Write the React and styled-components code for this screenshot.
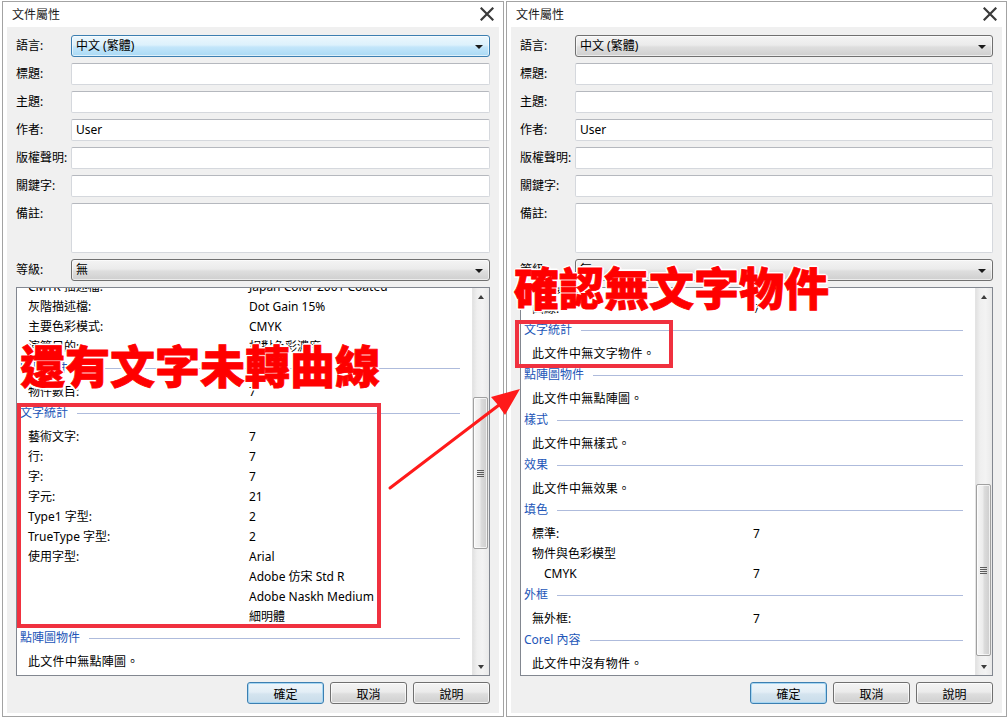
import styled, { createGlobalStyle } from 'styled-components'

const GlobalStyle = createGlobalStyle`
  html, body {
    margin: 0;
    padding: 0;
    background: #ffffff;
  }
  body {
    width: 1008px;
    height: 718px;
    overflow: hidden;
    font-family: "Noto Sans", "Noto Sans CJK TC", sans-serif;
    font-size: 12px;
    color: #000;
  }
  * { box-sizing: border-box; }
`

const leftRows = [
  { t: 'item', label: 'CMYK 描述檔:', value: 'Japan Color 2001 Coated' },
  { t: 'item', label: '灰階描述檔:', value: 'Dot Gain 15%' },
  { t: 'item', label: '主要色彩模式:', value: 'CMYK' },
  { t: 'item', label: '演算目的:', value: '相對色彩濃度' },
  { t: 'head', label: '圖形物件' },
  { t: 'item', label: '物件數目:', value: '7' },
  { t: 'head', label: '文字統計' },
  { t: 'item', label: '藝術文字:', value: '7' },
  { t: 'item', label: '行:', value: '7' },
  { t: 'item', label: '字:', value: '7' },
  { t: 'item', label: '字元:', value: '21' },
  { t: 'item', label: 'Type1 字型:', value: '2' },
  { t: 'item', label: 'TrueType 字型:', value: '2' },
  { t: 'item', label: '使用字型:', value: 'Arial' },
  { t: 'item', label: '', value: 'Adobe 仿宋 Std R' },
  { t: 'item', label: '', value: 'Adobe Naskh Medium' },
  { t: 'item', label: '', value: '細明體' },
  { t: 'head', label: '點陣圖物件' },
  { t: 'msg', label: '此文件中無點陣圖。' },
]

const rightRows = [
  { t: 'item', label: '物件數目:', value: '7' },
  { t: 'item', label: '曲線:', value: '7' },
  { t: 'head', label: '文字統計' },
  { t: 'msg', label: '此文件中無文字物件。' },
  { t: 'head', label: '點陣圖物件' },
  { t: 'msg', label: '此文件中無點陣圖。' },
  { t: 'head', label: '樣式' },
  { t: 'msg', label: '此文件中無樣式。' },
  { t: 'head', label: '效果' },
  { t: 'msg', label: '此文件中無效果。' },
  { t: 'head', label: '填色' },
  { t: 'item', label: '標準:', value: '7' },
  { t: 'item', label: '物件與色彩模型', value: '' },
  { t: 'item', label: 'CMYK', value: '7', indent: true },
  { t: 'head', label: '外框' },
  { t: 'item', label: '無外框:', value: '7' },
  { t: 'head', label: 'Corel 內容' },
  { t: 'msg', label: '此文件中沒有物件。' },
]

const CloseIcon = () => (
  <svg width="14" height="14" viewBox="0 0 14 14">
    <path d="M1.5 1.5 L12.5 12.5 M12.5 1.5 L1.5 12.5" stroke="#3a3a3a" strokeWidth="2.2" strokeLinecap="square" />
  </svg>
)

const DocDialog = ({ width, hover, rows, offset, thumbTop, thumbHeight }) => (
  <Dialog $width={width}>
    <TitleBar>
      <Title>文件屬性</Title>
      <Close>
        <CloseIcon />
      </Close>
    </TitleBar>
    <Client>
      <Label>語言:</Label>
      <Combo $hover={hover}>中文 (繁體)</Combo>
      <Label>標題:</Label>
      <TextBox />
      <Label>主題:</Label>
      <TextBox />
      <Label>作者:</Label>
      <TextBox>User</TextBox>
      <Label>版權聲明:</Label>
      <TextBox />
      <Label>關鍵字:</Label>
      <TextBox />
      <Label>備註:</Label>
      <TextBox />
      <Label>等級:</Label>
      <Combo>無</Combo>
      <ListBox>
        <Viewport>
          <ListContent style={{ marginTop: offset }}>
            {rows.map((r, i) => {
              if (r.t === 'head') return <SectionHead key={i}>{r.label}</SectionHead>
              if (r.t === 'msg') return <Message key={i}>{r.label}</Message>
              return (
                <ItemRow key={i}>
                  <ItemLabel $indent={r.indent}>{r.label}</ItemLabel>
                  <span>{r.value}</span>
                </ItemRow>
              )
            })}
          </ListContent>
        </Viewport>
        <ScrollBar>
          <ScrollButton>
            <ArrowUp />
          </ScrollButton>
          <Track>
            <Thumb style={{ marginTop: thumbTop, height: thumbHeight }}>
              <Grip />
            </Thumb>
          </Track>
          <ScrollButton>
            <ArrowDown />
          </ScrollButton>
        </ScrollBar>
      </ListBox>
      <ButtonRow>
        <Button $default>確定</Button>
        <Button>取消</Button>
        <Button>說明</Button>
      </ButtonRow>
    </Client>
  </Dialog>
)

export default function App() {
  return (
    <>
      <GlobalStyle />
      <Page>
        <DocDialog width={502} hover rows={leftRows} offset={-11} thumbTop={92} thumbHeight={152} />
        <DocDialog width={501} rows={rightRows} offset={-9} thumbTop={179} thumbHeight={172} />

        <Callout $x={20} $y={342}>還有文字未轉曲線</Callout>
        <Callout $x={514} $y={264}>確認無文字物件</Callout>
        <RedBox $x={17} $y={403} $w={364} $h={225} />
        <RedBox $x={515} $y={320} $w={158} $h={48} />
        <Overlay width="1008" height="718" viewBox="0 0 1008 718">
          <line x1="390" y1="488" x2="503" y2="402" stroke="#ff1a1a" strokeWidth="3" strokeLinecap="round" />
          <polygon points="520,389 505,415 498,405 491,397" fill="#ff1a1a" />
        </Overlay>
      </Page>
    </>
  )
}

const Page = styled.div`
  position: relative;
  display: flex;
  gap: 2px;
  width: 1008px;
  height: 718px;
  padding: 1px 0 0 2px;
`

const Dialog = styled.div`
  width: ${(p) => p.$width}px;
  height: 716px;
  border: 1px solid #a3a3a3;
  background: #ffffff;
  padding: 0 4px 3px 4px;
  display: flex;
  flex-direction: column;
`

const TitleBar = styled.div`
  height: 25px;
  display: flex;
  align-items: center;
  justify-content: space-between;
  padding: 1px 5px 0 5px;
`

const Title = styled.span`
  font-size: 12px;
  color: #1a1a1a;
  line-height: 16px;
`

const Close = styled.span`
  display: flex;
  align-items: center;
  margin-top: -2px;
`

const Client = styled.div`
  flex: 1;
  background: #f0f0f0;
  padding: 8px 9px 9px 9px;
  display: grid;
  grid-template-columns: 55px 1fr;
  grid-template-rows: repeat(6, 22px) 50px 22px 1fr 22px;
  row-gap: 6px;
  min-height: 0;
`

const Label = styled.div`
  line-height: 22px;
  font-size: 12px;
  white-space: nowrap;
`

const TextBox = styled.div`
  background: #ffffff;
  border: 1px solid #d5d8dd;
  border-top-color: #b5b8be;
  border-radius: 2px;
  padding: 0 4px;
  line-height: 20px;
  font-size: 12px;
`

const Combo = styled.div`
  position: relative;
  border: 1px solid ${(p) => (p.$hover ? '#3c7fb1' : '#707070')};
  border-radius: 3px;
  padding: 0 4px;
  line-height: 20px;
  font-size: 12px;
  background: ${(p) =>
    p.$hover
      ? 'linear-gradient(#ecf7fd 0%, #dcf1fc 45%, #c3e6fa 55%, #a9d9f5 100%)'
      : 'linear-gradient(#f4f4f4 0%, #ebebeb 45%, #dedede 55%, #cfcfcf 100%)'};
  box-shadow: inset 0 0 0 1px rgba(255, 255, 255, 0.6);

  &::after {
    content: '';
    position: absolute;
    right: 6px;
    top: 9px;
    border-left: 4px solid transparent;
    border-right: 4px solid transparent;
    border-top: 4px solid #1a1a1a;
  }
`

const ListBox = styled.div`
  grid-column: 1 / -1;
  border: 1px solid #828790;
  background: #ffffff;
  display: flex;
  overflow: hidden;
  min-height: 0;
`

const Viewport = styled.div`
  flex: 1;
  overflow: hidden;
`

const ListContent = styled.div`
  display: flex;
  flex-direction: column;
`

const SectionHead = styled.div`
  height: 25px;
  padding: 0 12px 3px 3px;
  display: flex;
  align-items: center;
  gap: 9px;
  color: #2356b8;
  font-size: 12px;
  line-height: 22px;
  white-space: nowrap;

  &::after {
    content: '';
    flex: 1;
    height: 1px;
    background: #aebbdc;
  }
`

const ItemRow = styled.div`
  height: 20px;
  display: grid;
  grid-template-columns: 232px 1fr;
  line-height: 20px;
  font-size: 12px;
  white-space: nowrap;
`

const ItemLabel = styled.span`
  padding-left: ${(p) => (p.$indent ? 23 : 11)}px;
`

const Message = styled.div`
  height: 20px;
  line-height: 20px;
  padding-left: 11px;
  font-size: 12px;
  letter-spacing: 0.3px;
`

const ScrollBar = styled.div`
  width: 17px;
  display: flex;
  flex-direction: column;
  background: linear-gradient(to right, #e2e2e2 0%, #efefef 25%, #f3f3f3 60%, #e9e9e9 100%);
  border-left: 1px solid #e4e4e4;
`

const ScrollButton = styled.div`
  height: 17px;
  display: flex;
  align-items: center;
  justify-content: center;
`

const ArrowUp = styled.span`
  border-left: 3.5px solid transparent;
  border-right: 3.5px solid transparent;
  border-bottom: 4px solid #3d3d3d;
`

const ArrowDown = styled.span`
  border-left: 3.5px solid transparent;
  border-right: 3.5px solid transparent;
  border-top: 4px solid #3d3d3d;
`

const Track = styled.div`
  flex: 1;
  display: flex;
  flex-direction: column;
`

const Thumb = styled.div`
  margin-left: 0;
  margin-right: 1px;
  border: 1px solid #a0a0a0;
  border-radius: 2px;
  background: linear-gradient(to right, #f6f6f6 0%, #ececec 45%, #dcdcdc 55%, #cdcdcd 100%);
  box-shadow: inset 0 0 0 1px rgba(255, 255, 255, 0.7);
  display: flex;
  align-items: center;
  justify-content: center;
`

const Grip = styled.span`
  width: 7px;
  height: 7px;
  background: repeating-linear-gradient(#5c5c5c 0 1px, transparent 1px 2px);
`

const ButtonRow = styled.div`
  grid-column: 1 / -1;
  display: flex;
  justify-content: flex-end;
  gap: 6px;
`

const Button = styled.button`
  width: 77px;
  height: 22px;
  padding: 0;
  font-family: "Noto Sans CJK TC", sans-serif;
  font-size: 12px;
  color: #000;
  border: 1px solid ${(p) => (p.$default ? '#3c7fb1' : '#707070')};
  border-radius: 3px;
  background: ${(p) =>
    p.$default
      ? 'linear-gradient(#eef5fa 0%, #e3eef6 45%, #d4e4ef 55%, #c8dcea 100%)'
      : 'linear-gradient(#f4f4f4 0%, #ebebeb 45%, #dddddd 55%, #cfcfcf 100%)'};
  box-shadow: inset 0 0 0 1px ${(p) => (p.$default ? '#a6d6f2' : 'rgba(255,255,255,0.7)')};
`

const Callout = styled.div`
  position: absolute;
  left: ${(p) => p.$x}px;
  top: ${(p) => p.$y}px;
  font-family: "Noto Sans CJK TC", sans-serif;
  font-weight: 900;
  font-size: 45px;
  line-height: 45px;
  color: #ff0000;
  white-space: nowrap;
  -webkit-text-stroke: 0.8px #ff0000;
  text-shadow:
    2px 0 0 #fff, -2px 0 0 #fff, 0 2px 0 #fff, 0 -2px 0 #fff,
    1.5px 1.5px 0 #fff, -1.5px 1.5px 0 #fff, 1.5px -1.5px 0 #fff, -1.5px -1.5px 0 #fff;
`

const RedBox = styled.div`
  position: absolute;
  left: ${(p) => p.$x}px;
  top: ${(p) => p.$y}px;
  width: ${(p) => p.$w}px;
  height: ${(p) => p.$h}px;
  border: 4px solid #f0313f;
  pointer-events: none;
`

const Overlay = styled.svg`
  position: absolute;
  left: 0;
  top: 0;
  pointer-events: none;
`
